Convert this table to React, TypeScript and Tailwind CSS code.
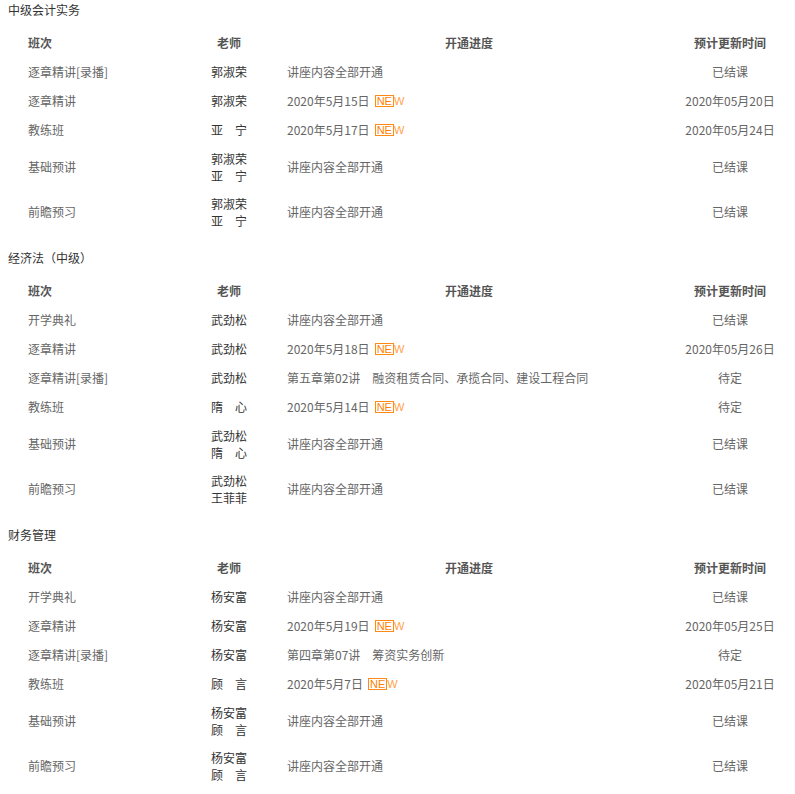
type Row = {
  name: string;
  teachers: string[];
  progress: string;
  isNew?: boolean;
  update: string;
};

type Section = {
  title: string;
  rows: Row[];
};

const ALL = "讲座内容全部开通";

const sections: Section[] = [
  {
    title: "中级会计实务",
    rows: [
      { name: "逐章精讲[录播]", teachers: ["郭淑荣"], progress: ALL, update: "已结课" },
      { name: "逐章精讲", teachers: ["郭淑荣"], progress: "2020年5月15日", isNew: true, update: "2020年05月20日" },
      { name: "教练班", teachers: ["亚\u3000宁"], progress: "2020年5月17日", isNew: true, update: "2020年05月24日" },
      { name: "基础预讲", teachers: ["郭淑荣", "亚\u3000宁"], progress: ALL, update: "已结课" },
      { name: "前瞻预习", teachers: ["郭淑荣", "亚\u3000宁"], progress: ALL, update: "已结课" },
    ],
  },
  {
    title: "经济法（中级）",
    rows: [
      { name: "开学典礼", teachers: ["武劲松"], progress: ALL, update: "已结课" },
      { name: "逐章精讲", teachers: ["武劲松"], progress: "2020年5月18日", isNew: true, update: "2020年05月26日" },
      {
        name: "逐章精讲[录播]",
        teachers: ["武劲松"],
        progress: "第五章第02讲\u3000融资租赁合同、承揽合同、建设工程合同",
        update: "待定",
      },
      { name: "教练班", teachers: ["隋\u3000心"], progress: "2020年5月14日", isNew: true, update: "待定" },
      { name: "基础预讲", teachers: ["武劲松", "隋\u3000心"], progress: ALL, update: "已结课" },
      { name: "前瞻预习", teachers: ["武劲松", "王菲菲"], progress: ALL, update: "已结课" },
    ],
  },
  {
    title: "财务管理",
    rows: [
      { name: "开学典礼", teachers: ["杨安富"], progress: ALL, update: "已结课" },
      { name: "逐章精讲", teachers: ["杨安富"], progress: "2020年5月19日", isNew: true, update: "2020年05月25日" },
      { name: "逐章精讲[录播]", teachers: ["杨安富"], progress: "第四章第07讲\u3000筹资实务创新", update: "待定" },
      { name: "教练班", teachers: ["顾\u3000言"], progress: "2020年5月7日", isNew: true, update: "2020年05月21日" },
      { name: "基础预讲", teachers: ["杨安富", "顾\u3000言"], progress: ALL, update: "已结课" },
      { name: "前瞻预习", teachers: ["杨安富", "顾\u3000言"], progress: ALL, update: "已结课" },
    ],
  },
];

function NewBadge() {
  return (
    <span className="ml-[5px] inline-flex items-center font-['Liberation_Sans',sans-serif] text-[11px] leading-[9px] text-[#ff7f00]">
      <span className="border border-[#ff8a1a] px-[1px] pt-[1px]">NE</span>
      <span className="pt-[1px] text-[#ffa24a]">W</span>
    </span>
  );
}

function CourseTable({ section, first }: { section: Section; first: boolean }) {
  return (
    <div>
      <div className={`${first ? "pt-[1px]" : "pt-[15px]"} pb-[10px] pl-[8px] leading-[17px] text-[#333]`}>
        {section.title}
      </div>

      <div className="pl-[20px]">
        {/* header */}
        <div className="flex h-[29px] items-center font-bold text-[#555]">
          <div className="w-[159px] shrink-0 pl-[8px]">班次</div>
          <div className="w-[100px] shrink-0 text-center">老师</div>
          <div className="w-[380px] shrink-0 text-center">开通进度</div>
          <div className="w-[142px] shrink-0 text-center">预计更新时间</div>
        </div>

        {section.rows.map((row, i) => (
          <div
            key={i}
            className={`flex ${row.teachers.length > 1 ? "h-[45px]" : "h-[29px]"} items-center text-[#666]`}
          >
            <div className="w-[159px] shrink-0 pl-[8px]">{row.name}</div>
            <div className="flex w-[100px] shrink-0 flex-col items-center text-[#333]">
              {row.teachers.map((t) => (
                <span key={t}>{t}</span>
              ))}
            </div>
            <div className="flex w-[380px] shrink-0 items-center pl-[8px] whitespace-nowrap">
              {row.progress}
              {row.isNew && <NewBadge />}
            </div>
            <div className="w-[142px] shrink-0 text-center">{row.update}</div>
          </div>
        ))}
      </div>
    </div>
  );
}

export default function App() {
  return (
    <div className="w-[795px] overflow-hidden bg-white font-['Noto_Sans_CJK_SC','Microsoft_YaHei',sans-serif] text-[12px] leading-[17px]">
      {sections.map((s, i) => (
        <CourseTable key={s.title} section={s} first={i === 0} />
      ))}
    </div>
  );
}
